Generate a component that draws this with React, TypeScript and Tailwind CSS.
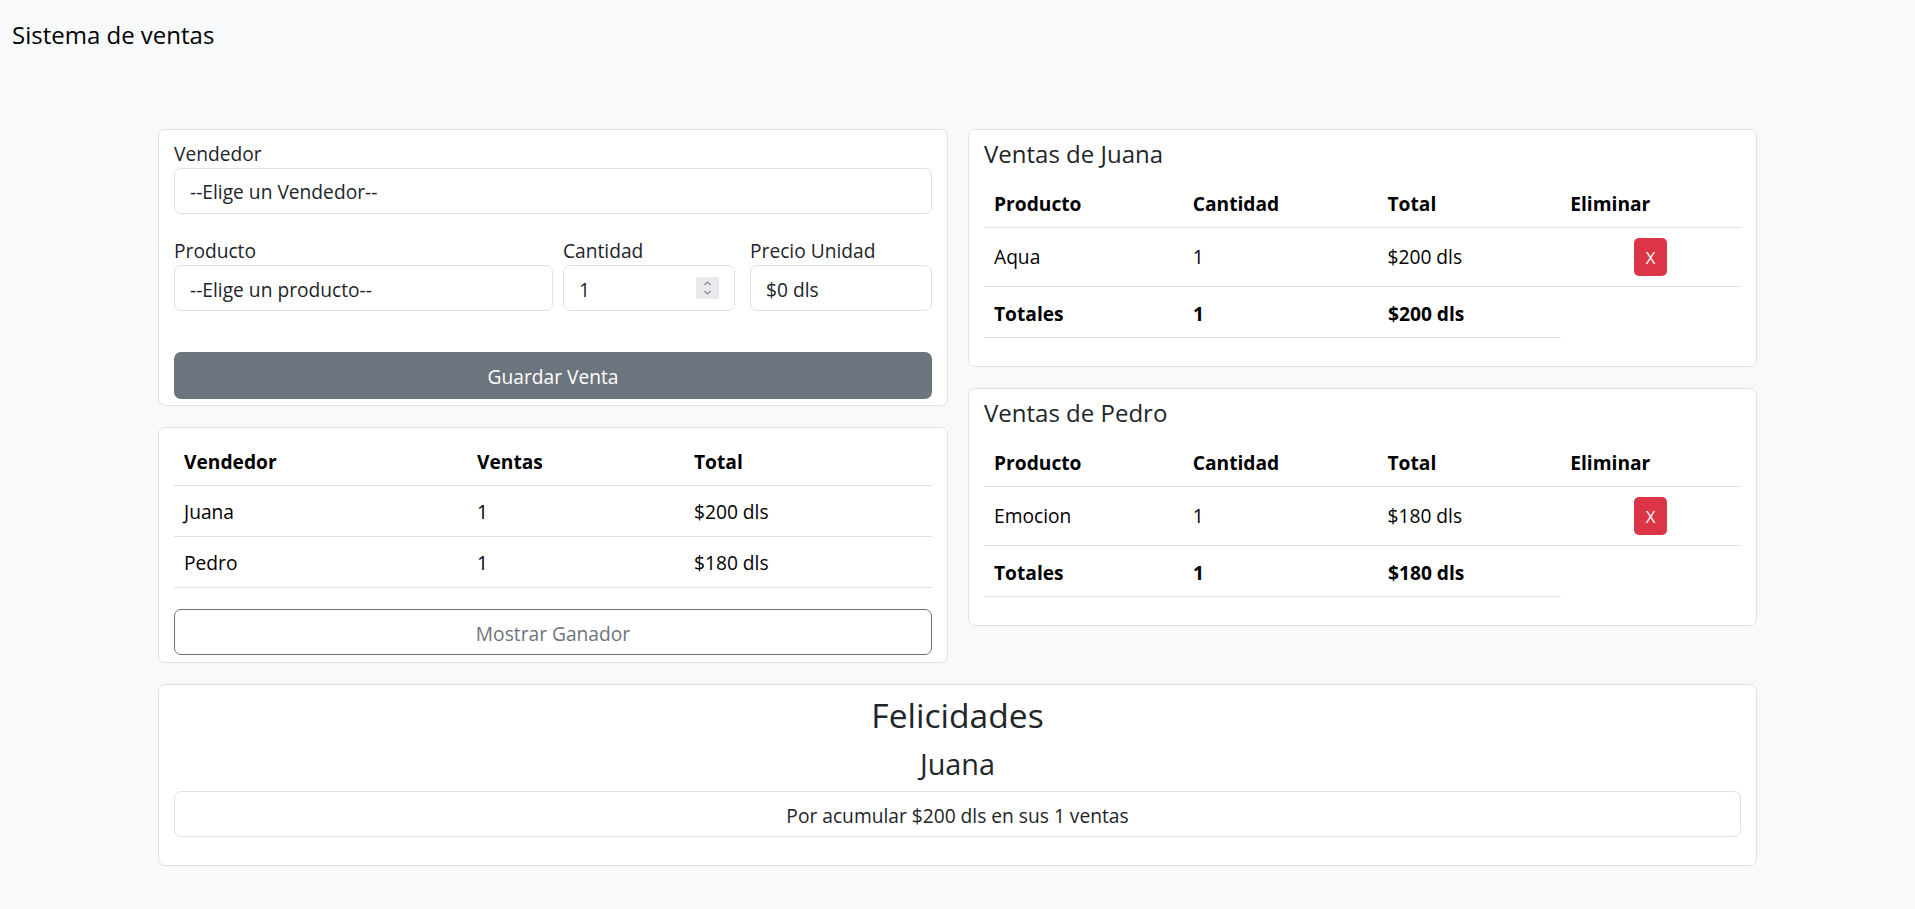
import React from "react";

function Spinner() {
  return (
    <div className="absolute right-[15px] top-1/2 -translate-y-1/2 w-[23px] h-[22px] bg-[#e9e9ed] rounded-[2px]">
      <svg width="23" height="22" viewBox="0 0 23 22">
        <polyline points="8.5,8 11.5,5 14.5,8" fill="none" stroke="#8a8a8e" strokeWidth="1.2" />
        <polyline points="8.5,14 11.5,17 14.5,14" fill="none" stroke="#8a8a8e" strokeWidth="1.2" />
      </svg>
    </div>
  );
}

function Field({ children, className = "" }: { children: React.ReactNode; className?: string }) {
  return (
    <div
      className={
        "relative h-[46px] flex items-center pl-[15px] pt-[4px] border border-[#dee2e6] rounded-[7px] bg-white text-[19.2px] text-[#212529] " +
        className
      }
    >
      {children}
    </div>
  );
}

function Label({ children }: { children: React.ReactNode }) {
  return <div className="h-[28.8px] pt-[2px] text-[19.2px] leading-[26.8px]">{children}</div>;
}

function SalesCard({ name, product, total }: { name: string; product: string; total: string }) {
  return (
    <div className="bg-white border border-[#dee2e6] rounded-[7px] px-[15px] pt-[9.3px] pb-[28px]">
      <div className="text-[24px] leading-[28.8px] text-[#212529]">Ventas de {name}</div>
      <div className="mt-[10.8px] text-[19.2px] text-black">
        <div className="flex h-[49.1px] pt-[2px] border-b border-[#dee2e6] font-bold">
          <div className="w-[199px] pl-[10px] flex items-center">Producto</div>
          <div className="w-[195px] pl-[10px] flex items-center">Cantidad</div>
          <div className="w-[183px] pl-[10px] flex items-center">Total</div>
          <div className="w-[181px] pl-[10px] flex items-center">Eliminar</div>
        </div>
        <div className="flex h-[59px] border-b border-[#dee2e6]">
          <div className="w-[199px] pl-[10px] flex items-center">{product}</div>
          <div className="w-[195px] pl-[10px] flex items-center">1</div>
          <div className="w-[183px] pl-[10px] flex items-center">{total}</div>
          <div className="w-[181px] flex items-center justify-center">
            <button className="w-[33px] h-[38px] bg-[#dc3545] text-white text-[16.8px] rounded-[5px] flex items-center justify-center">
              X
            </button>
          </div>
        </div>
        <div className="flex h-[51px] font-bold">
          <div className="flex w-[577px] pt-[4px] border-b border-[#dee2e6]">
            <div className="w-[199px] pl-[10px] flex items-center">Totales</div>
            <div className="w-[195px] pl-[10px] flex items-center">1</div>
            <div className="w-[183px] pl-[10px] flex items-center">{total}</div>
          </div>
        </div>
      </div>
    </div>
  );
}

export default function App() {
  return (
    <div className="min-h-screen w-full bg-[#f8f9fa] font-['Open_Sans',sans-serif] text-[#212529]">
      <div className="pl-[12px] pt-[21px] text-[24px] leading-[28.8px] text-black">Sistema de ventas</div>

      <div className="ml-[158px] mt-[79.5px] w-[1599px]">
        <div className="flex gap-[20px] items-start">
          {/* Left column */}
          <div className="w-[790px] flex flex-col gap-[21px]">
            <div className="bg-white border border-[#dee2e6] rounded-[7px] px-[15px] pt-[8.6px] pb-[6px]">
              <Label>Vendedor</Label>
              <Field>--Elige un Vendedor--</Field>
              <div className="flex mt-[22px]">
                <div className="w-[379px]">
                  <Label>Producto</Label>
                  <Field className="mt-[1px]">--Elige un producto--</Field>
                </div>
                <div className="w-[172px] ml-[10px]">
                  <Label>Cantidad</Label>
                  <Field className="mt-[1px]">
                    1
                    <Spinner />
                  </Field>
                </div>
                <div className="w-[182px] ml-[15px]">
                  <Label>Precio Unidad</Label>
                  <Field className="mt-[1px]">$0 dls</Field>
                </div>
              </div>
              <button className="mt-[40.5px] w-full h-[47px] pt-[4px] bg-[#6c757d] text-white text-[19.2px] rounded-[7px] flex items-center justify-center">
                Guardar Venta
              </button>
            </div>

            <div className="bg-white border border-[#dee2e6] rounded-[7px] px-[15px] pt-[9.5px] pb-[7px]">
              <div className="text-[19.2px] text-black">
                <div className="flex h-[48.5px] pt-[3px] border-b border-[#dee2e6] font-bold">
                  <div className="w-[293px] pl-[10px] flex items-center">Vendedor</div>
                  <div className="w-[217px] pl-[10px] flex items-center">Ventas</div>
                  <div className="w-[248px] pl-[10px] flex items-center">Total</div>
                </div>
                <div className="flex h-[51px] pt-[3px] border-b border-[#dee2e6]">
                  <div className="w-[293px] pl-[10px] flex items-center">Juana</div>
                  <div className="w-[217px] pl-[10px] flex items-center">1</div>
                  <div className="w-[248px] pl-[10px] flex items-center">$200 dls</div>
                </div>
                <div className="flex h-[51px] pt-[3px] border-b border-[#dee2e6]">
                  <div className="w-[293px] pl-[10px] flex items-center">Pedro</div>
                  <div className="w-[217px] pl-[10px] flex items-center">1</div>
                  <div className="w-[248px] pl-[10px] flex items-center">$180 dls</div>
                </div>
              </div>
              <button className="mt-[21px] w-full h-[46px] pt-[4px] border border-[#6c757d] text-[#6c757d] bg-white text-[19.2px] rounded-[7px] flex items-center justify-center">
                Mostrar Ganador
              </button>
            </div>
          </div>

          {/* Right column */}
          <div className="w-[789px] flex flex-col gap-[21px]">
            <SalesCard name="Juana" product="Aqua" total="$200 dls" />
            <SalesCard name="Pedro" product="Emocion" total="$180 dls" />
          </div>
        </div>

        <div className="mt-[21px] bg-white border border-[#dee2e6] rounded-[7px] px-[15px] pt-[9.8px] pb-[27.7px] text-center">
          <div className="text-[33.6px] leading-[40.3px] text-[#212529]">Felicidades</div>
          <div className="mt-[11.6px] text-[28.8px] leading-[34.6px] text-[#212529]">Juana</div>
          <div className="mt-[9.7px] h-[46px] pt-[4px] border border-[#dee2e6] rounded-[7px] flex items-center justify-center text-[19.2px] text-[#212529]">
            Por acumular $200 dls en sus 1 ventas
          </div>
        </div>
      </div>
    </div>
  );
}
